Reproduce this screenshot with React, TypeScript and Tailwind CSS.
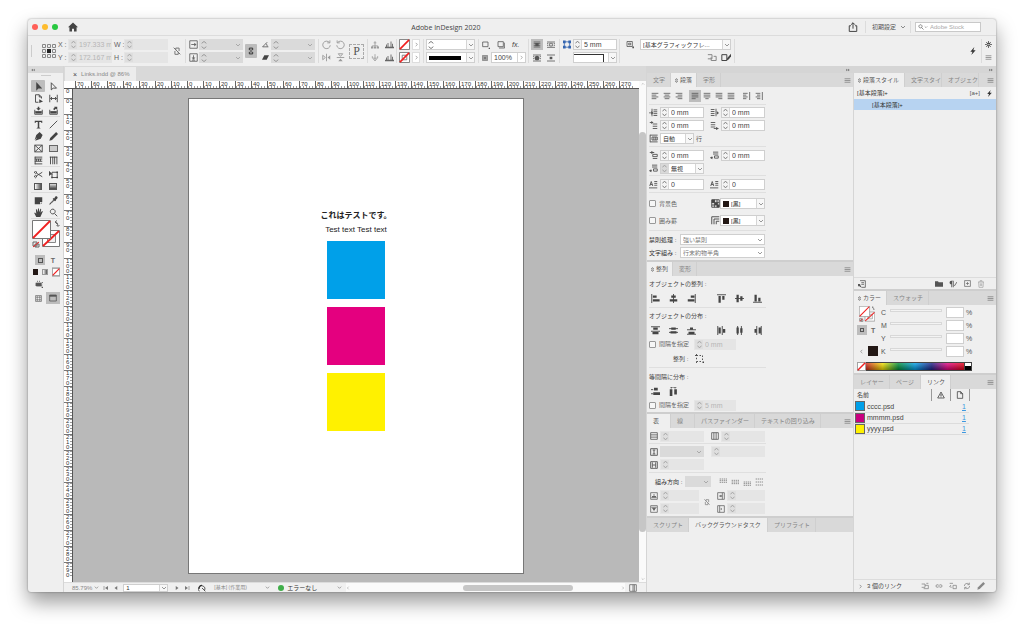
import type { ReactNode } from "react";
import clsx from "clsx";

// [stroke path, fill path], drawn on a 12 x 12 grid
const ICONS: Record<string, [string, string?]> = {
  home: ["", "M6 .5 0 6.3h1.7V11.5h3.1V8h2.4v3.5h3.1V6.3H12z"],
  share: ["M3.5 4.5h-2v6.8h9V4.5h-2M6 8V1M3.7 3.2 6 .9l2.3 2.3"],
  search: ["M5 1.5a3.2 3.2 0 1 0 .01 0M7.3 7.3 11 11"],
  down: ["M2 4l4 4 4-4"],
  right: ["M4 2l4 4-4 4"],
  left: ["M8 2 4 6l4 4"],
  up: ["M2 8l4-4 4 4"],
  spin: ["M2.5 3.5 6 .7l3.5 2.8M2.5 8.5 6 11.3l3.5-2.8"],
  updown: ["M3 4.5 6 1l3 3.5zM3 7.5 6 11l3-3.5z"],
  dblLeft: ["", "M5.5 2v8L1 6zM11 2v8L6.5 6z"],
  dblRight: ["", "M1 2v8l4.5-4zM6.5 2v8L11 6z"],
  menu: ["M1 3h10M1 6h10M1 9h10"],
  gear: ["M6 3.5a2.5 2.5 0 1 0 .01 0M6 0v3M6 9v3M0 6h3M9 6h3M2 2l2 2M8 8l2 2M10 2 8 4M4 8l-2 2M4 4h4v1H4M4 8h4"],
  bolt: ["", "M8 0 2 7h3.2L3.5 12 10 4.7H6.5z"],
  link: ["M4 5V2.5h4V5M4 7v2.5h4V7M6 4v4"],
  unlink: ["M4.5 5V2.5h4V6M3.5 6v4h4V7M2 2l8 8"],
  fitW: ["M1 1h10v10H1zM3 6h5", "M7 3.5 10 6 7 8.5z"],
  fitH: ["M1 1h10v10H1zM6 3v4M4 9.5h4", "M3.5 6h5L6 9z"],
  angle: ["M1 10h10M1 10 9 2M7 4.5q2 2 2 5"],
  shear: ["", "M4 2h8L8 10H0z"],
  rotCw: ["M10 3.5A5 5 0 1 0 11 7M10.5.5v3.3H7"],
  rotCcw: ["M2 3.5A5 5 0 1 1 1 7M1.5.5v3.3H5"],
  flipH: ["M6 1v10M1 3v6l3.5-3z", "M11 3v6L7.5 6z"],
  flipV: ["M1 6h10M3 1h6L6 4.5z", "M3 11h6L6 7.5z"],
  treeUp: ["M6 1v8M2 11V8h8v3M4 3.5h4", "M4 9h4v3H4zM0 9h3v3H0zM9 9h3v3H9z"],
  treeDown: ["M6 1v10M2 4v3h8V4M3.5 8.5 6 11l2.5-2.5"],
  bars: ["M4 10V4M8 10V2M2 10V6M10 10V5", "M0 9h12v2H0z"],
  boxDot: ["M1 1.5h8v7H1z", "M10 10h2v2h-2z"],
  box: ["M1.5 1h8v7.5h-8zM3 10.5h8.5V2.5"],
  opacity: ["M1 1h10v10H1zM3 3h2v2H3zM7 3h2v2H7zM5 5h2v2H5zM3 7h2v2H3zM7 7h2v2H7z"],
  wrapNone: ["M1 1.5h10M1 4h10M1 6.5h10M1 9h10", "M3.5 3h5v5h-5z"],
  wrapBox: ["M0 1.5h12M0 4h2M10 4h2M0 6.5h2M10 6.5h2M0 9.5h12M4 3.5h4v4H4z"],
  wrapShape: ["M0 1.5h12M0 4h2M10 4h2M0 7h2M10 7h2M0 10.5h12", "M6 2.5a3.5 3.5 0 1 0 .01 0z"],
  wrapJump: ["M0 1.5h12M0 10.5h12", "M4 4h4v4H4z"],
  corner: ["M3 2h6M3 10h6M2 3v6M10 3v6", "M0 0h4v4H0zM8 0h4v4H8zM0 8h4v4H0zM8 8h4v4H8z"],
  frameFx: ["M1.5 1.5h8V9h-8zM4 4h3v2.5H4z", "M9.5 9H12v2.5H9.5z"],
  copyBack: ["M1 2h5v5H1M5 5v4h6V4H8"],
  boxPen: ["M1 2h6v7H1z", "M12 1 7.5 6l-1 3 3-1.5L12 4z"],
  justL: ["M1 2h10M1 4.7h7M1 7.4h10M1 10h7"],
  justC: ["M1 2h10M2.5 4.7h7M1 7.4h10M2.5 10h7"],
  justR: ["M1 2h10M4 4.7h7M1 7.4h10M4 10h7"],
  justFL: ["M1 2h10M1 4.7h10M1 7.4h10M1 10h6"],
  justFC: ["M1 2h10M1 4.7h10M1 7.4h10M3.5 10h5"],
  justFR: ["M1 2h10M1 4.7h10M1 7.4h10M5 10h6"],
  justAll: ["M1 2h10M1 4.7h10M1 7.4h10M1 10h10"],
  justIn: ["M0 2h7M0 4.7h5M0 7.4h7M0 10h5M10 0v12"],
  justOut: ["M1 2h7M3 4.7h5M1 7.4h7M3 10h5M11 0v12"],
  indL: ["M4 1v10M6 2.5h5M6 5h5M6 7.5h5M6 10h5", "M0 6h3V4l3 2.5L3 9V7H0z"],
  indR: ["M1 2h5M1 4.7h5M1 7.4h5M1 10h5M8 1v10", "M12 6.5 9 4v5z"],
  indFirst: ["M5 4h6M5 7h6M5 10h6M1 2h4", "M3 0v4l3-2z"],
  indLast: ["M1 2h6M1 5h6M1 8h6M5 10h5", "M8 8v4l4-2z"],
  lines: ["M1.500 1v10M1.5 1.5h10M1.5 10.5h10M4 4h7v4H4zM6.5 4v4M9 4v4"],
  before: ["M5 4.5h6v3H5zM5 10h6M1 2h6", "M3 0v4l4-2z"],
  after: ["M4 1.5h7M4 4h7M6 6.5h5v3H6zM1 9h3", "M0 9l3-2v4z"],
  dropCap: ["M1 8 3 2l2 6M1.5 6h3M7 2h4M7 4.5h4M7 7h4M0 10.5h11"],
  shade: ["M1 1h10v10H1zM1 4.5h10M1 8h10M4.5 1v10M8 1v10", "M1 1h4v4H1zM5 5h4v3H5zM8 8h3v3H8z"],
  border: ["M1 11V1h10M4 11V4h7M7 11V7h4"],
  alL: ["M1 0v12", "M2.5 2h5v3h-5zM2.5 7h9v3h-9z"],
  alC: ["M6 0v12", "M3 2h6v3H3zM1 7h10v3H1z"],
  alR: ["M11 0v12", "M5 2h5v3H5zM1 7h9v3H1z"],
  alT: ["M0 1h12", "M2 2.5h3v9H2zM7 2.5h3v5H7z"],
  alM: ["M0 6h12", "M2 1h3v10H2zM7 3h3v6H7z"],
  alB: ["M0 11h12", "M2 1h3v9H2zM7 5h3v5H7z"],
  diT: ["M0 1h12M0 7h12", "M3 2h6v3H3zM2 8h8v3H2z"],
  diM: ["M0 3.5h12M0 8.5h12", "M3 2h6v3H3zM2 7h8v3H2z"],
  diB: ["M0 5h12M0 11h12", "M4 2h4v3H4zM2 7.5h8v3H2z"],
  diL: ["M1 0v12M7 0v12", "M2 2h3v8H2zM8 4h3v5H8z"],
  diC: ["M3.5 0v12M8.5 0v12", "M2 2h3v8H2zM7 3h3v6H7z"],
  diR: ["M5 0v12M11 0v12", "M2 4h3v5H2zM7.5 2h3v8h-3z"],
  dotBox: ["M2 0v2M2 10v2M0 2h4M6 2h2M2 5v2M2 10h2M6 10h2M10 2v2M10 6v2", "M10 10h2v2h-2z"],
  spV: ["M0 3.5h3M0 9h3", "M4 1h5v3.5H4zM3 7h9v3.5H3z"],
  spH: ["M2 0h8M3 0v2M8 0v2", "M1 3h3.5v9H1zM7 3h3.5v7H7z"],
  rows: ["M1 1h10v10H1zM1 4.3h10M1 7.7h10"],
  cols: ["M1 1h10v10H1zM4.3 1v10M7.7 1v10"],
  cellH: ["M1 1h10v10H1zM6 3v6M4 3h4M4 9h4"],
  cellW: ["M1 1h10v10H1zM3.5 2v8M8.5 2v8M4 6h4"],
  gridTop: ["M1 1.5h2M4 1.5h2M7 1.5h2M10 1.5h2M1 4h2M4 4h2M7 4h2M10 4h2M1 6.5h2M4 6.5h2M7 6.5h2M10 6.5h2"],
  gridMid: ["M1 3.5h2M4 3.5h2M7 3.5h2M10 3.5h2M1 6h2M4 6h2M7 6h2M10 6h2M1 8.5h2M4 8.5h2M7 8.5h2M10 8.5h2"],
  gridBottom: ["M1 6h2M4 6h2M7 6h2M10 6h2M1 8.5h2M4 8.5h2M7 8.5h2M10 8.5h2M1 11h2M4 11h2M7 11h2M10 11h2"],
  gridFull: ["M1 1.5h2M4 1.5h2M7 1.5h2M10 1.5h2M1 6h2M4 6h2M7 6h2M10 6h2M1 10.5h2M4 10.5h2M7 10.5h2M10 10.5h2"],
  padB: ["M1 1h10v10H1zM2 8.5h8M6 3v4", "M3 6h6v2H3z"],
  padT: ["M1 1h10v10H1zM2 3.5h8", "M3 4.5h6L6 9z"],
  padR: ["M1 1h10v10H1zM8 1v10M3 6h4", "M5 4v4l3-2z"],
  padL: ["M1 1h10v10H1zM4 1v10", "M7 4v4L5 6z"],
  select: ["", "M3 0v11.5l2.8-2.8H11z"],
  direct: ["M3 1v9.5l2.5-2.3H10z"],
  page: ["M2 1h5l3 3v2M2 1v10h4M7 1v3h3", "M7 7l5 3-5 2z"],
  gap: ["M1 1v10M11 1v10M2 6h8M4 4 2 6l2 2M8 4l2 2-2 2"],
  collect: ["M1 5v6h10V5M1 8h10", "M2 7h8v3H2zM5 1h2v2h2L6 6 3 3h2z"],
  place: ["M1 5v6h10V5M1 8h10", "M2 7h8v3H2zM7 1h4v4L9 3.5l-2 2L5.500 4l2-2z"],
  type: ["", "M1 1h10v3h-1l-.5-1.5H7V10l1.5.5v.7h-5v-.7L5 10V2.5H2.5L2 4H1z"],
  line: ["M1 11 11 1"],
  pen: ["", "M7.5 0l4 4L9 9l-7.500 2.500 3-4.500-1 1L.8 11 3 4z"],
  pencil: ["", "M9.5 0 12 2.500l-8 8-3.500 1 1-3.500z"],
  frame: ["M1 1.5h10v9H1zM1 1.5l10 9M11 1.5l-10 9"],
  hGrid: ["M1 1.5h10M1 4h10M1 7h10M1 10.5h10M1.5 1v10M3.5 4v3M6 4v3M8.5 4v3"],
  vGrid: ["M1 1.5h10M2 1v10M5 1v10M7.5 1v10M10.5 1v10"],
  scissors: ["M3 4l8 5M3 8l8-5M2 2a1.3 1.3 0 1 0 .1 0M2 7.5a1.3 1.3 0 1 0 .1 0"],
  transform: ["M4 3h7v7H4z", "M0 1v7l2.5-2H5zM3 9h2v2H3zM10 2h2v2h-2zM10 9h2v2h-2z"],
  note: ["", "M1 1.500h10V8H8v3H1zM9 9h2l-2 2z"],
  eyedrop: ["M7 4.5l-5 5L1 11l1.5-1 5-5", "M8.5.8c1.5-1.500 4 .8 2.500 2.500L9 5.200l.5.8L8 7 4.800 4l1.300-1.200.8.5z"],
  hand: ["", "M3 12 .3 6.500l1-.6L3 7.500 2.500 2l1.200-.3L5 5.500 5.300.5h1.200L7 5.500 8.500 1l1.100.3-.8 5L10.800 4l1 .6L9.800 9l-1.300 3z"],
  viewMode: ["M1 1h10v10H1zM3 3h2v2H3zM7 3h2v2H7zM3 7h2v2H3zM7 7h2v2H7z"],
  screen: ["M1 1.5h10v9H1z", "M1 1.5h10V4H1z"],
  clip: ["M2 5h8v4H2z", "M1 4h8v5H1zM3 1h1v2H3zM6 1h1v2H6zM10 3h2v1h-2zM10 10h2v2h-2z"],
  folder: ["", "M0 2h4.5l1 1.5H12V10H0z"],
  para: ["M8 9l4-6", "M7 1H3.5C0 1 0 6.5 3.5 6.5V11H5V2h1v9h1z"],
  plusBox: ["M1 1h10v10H1zM6 3.5v5M3.5 6h5"],
  trash: ["M1.5 3h9M2.5 3l.5 8h6l.5-8M4.5 3V1h3v2M5 5v4M7 5v4"],
  styleLoad: ["M3 1h8v10H5M5 4h4M5 6.5h4", "M0 6h4L2.700 7.300 5 9.500 3.700 11 1.300 8.700 0 10z"],
  warn: ["M6 1.5l5 9H1z", "M5.3 4h1.4v3.5H5.3zM5.3 8.3h1.4v1.2H5.3z"],
  doc: ["M2 1h5l3 3v7H2zM7 1v3h3"],
  first: ["M2 2v8", "M10 2v8L4 6z"],
  last: ["M10 2v8", "M2 2v8l6-4z"],
  prev: ["", "M8.5 2v8L3 6z"],
  next: ["", "M3.5 2v8L9 6z"],
  relink: ["M1 3h5v5H1M6 5h5v5H4M8 2h3"],
  chain: ["M5 4H3.5a2 2 0 0 0 0 4H5M7 4h1.5a2 2 0 0 1 0 4H7M4 6h4"],
  goTo: ["M1 2h5M3 4.5 1 7l3 1M6 5h5v5H6z"],
  refresh: ["M2 6a4 4 0 0 1 7-2.5M10 6a4 4 0 0 1-7 2.5M9.5 1v3h-3M2.5 11V8h3"],
  split: ["M1 1h10v10H1zM6 1v10M8 1v10"],
  preflight: ["M2 11A5 5 0 1 1 10 9.5M6 6l5 5", "M6 1a5 5 0 0 0-5 6h2a3 3 0 0 1 3-4z"],
};

function Icon({ n, className = "size-2 text-[#555]" }: { n: string; className?: string }) {
  const [stroke, fill] = ICONS[n];
  return (
    <svg viewBox="0 0 12 12" className={clsx("shrink-0", className)} aria-hidden="true">
      {stroke && <path d={stroke} fill="none" stroke="currentColor" strokeWidth="1.2" />}
      {fill && <path d={fill} fill="currentColor" />}
    </svg>
  );
}

function IconBtn({ n, label, icon, className = "size-2.5" }: { n: string; label: string; icon?: string; className?: string }) {
  return (
    <button aria-label={label} className={clsx("flex shrink-0 items-center justify-center", className)}>
      <Icon n={n} className={icon} />
    </button>
  );
}

interface FieldProps {
  label: string;
  value?: string;
  off?: boolean;
  className?: string;
}

function NumField({ label, value = "", off, className = "w-11" }: FieldProps) {
  return (
    <span
      className={clsx(
        "flex h-[11px] shrink-0 border",
        off ? "border-[#e5e5e5] bg-[#e5e5e5] text-[#b5b5b5]" : "border-[#cfcfcf] bg-white text-[#444]",
        className
      )}
    >
      <button
        aria-label={`${label} step`}
        className={clsx("flex w-2 shrink-0 items-center justify-center", off ? "bg-[#dedede]" : "border-r border-[#d8d8d8] bg-[#f4f4f4]")}
      >
        <Icon n="spin" className={clsx("size-[7px]", off ? "text-[#888]" : "text-[#444]")} />
      </button>
      <input aria-label={label} defaultValue={value} disabled={off} className="w-0 min-w-0 flex-1 pl-0.5 text-[7px] leading-none" />
    </span>
  );
}

function SelectField({ label, value = "", off, className = "w-11", lead, plain }: FieldProps & { lead?: ReactNode; plain?: boolean }) {
  return (
    <span
      className={clsx(
        "flex h-[11px] shrink-0 items-center border",
        off ? "border-[#dadada] bg-[#dadada]" : "border-[#cfcfcf] bg-white text-[#333]",
        className
      )}
    >
      {lead}
      <select aria-label={label} disabled={off} className="h-full w-0 min-w-0 flex-1 appearance-none pl-0.5 text-[6px] leading-none">
        <option>{value}</option>
      </select>
      <span className={clsx("flex h-full w-2 shrink-0 items-center justify-center", !off && !plain && "border-l border-[#d5d5d5] bg-[#f7f7f7]")}>
        <Icon n="down" className={clsx("size-[6px]", off ? "text-[#888]" : "text-[#555]")} />
      </span>
    </span>
  );
}

function Check({ label }: { label: string }) {
  return (
    <label className="flex items-center gap-[3px] text-[6px] text-[#666]">
      <input type="checkbox" className="size-[7px] appearance-none rounded-[1px] border border-[#999] bg-[#f6f6f6]" />
      {label}
    </label>
  );
}

interface TabItem {
  name: string;
  w: string;
  active?: boolean;
  arrows?: boolean;
}

function TabBar({ tabs, menu = true, top = true }: { tabs: TabItem[]; menu?: boolean; top?: boolean }) {
  return (
    <div className={clsx("flex shrink-0 items-stretch bg-[#d9d9d9]", top ? "h-4 border-t-2 border-[#cecece]" : "h-3.5")}>
      <div role="tablist" className="flex min-w-0 flex-1">
        {tabs.map((t) => (
          <button
            key={t.name}
            role="tab"
            aria-selected={!!t.active}
            className={clsx(
              "flex shrink-0 items-center overflow-hidden border-r border-[#cfcfcf] text-[6px] whitespace-nowrap",
              t.arrows ? "gap-px pl-[3px]" : "pl-1.5",
              t.active ? "bg-[#efefef] text-[#555]" : "text-[#858585]",
              t.w
            )}
          >
            {t.arrows && <Icon n="updown" className="size-[5px] text-[#555]" />}
            {t.name}
          </button>
        ))}
      </div>
      {menu && <IconBtn n="menu" label="Panel menu" className="w-3" icon="size-[7px] text-[#777]" />}
    </div>
  );
}

const Rule = ({ className = "my-px" }: { className?: string }) => <div className={clsx("h-px shrink-0 bg-[#dfdfdf]", className)} />;

const Sep = ({ className = "mx-[3px]" }: { className?: string }) => <div className={clsx("h-6 w-px shrink-0 bg-[#dcdcdc]", className)} />;

const Pair = ({ children, className = "" }: { children: ReactNode; className?: string }) => (
  <div className={clsx("flex shrink-0 flex-col gap-0.5 *:h-[11px]", className)}>{children}</div>
);

function NoneSwatch({ className = "size-[11px]", hollow }: { className?: string; hollow?: boolean }) {
  return (
    <svg viewBox="0 0 12 12" className={clsx("shrink-0", className)} aria-hidden="true">
      <path d="M.5.5h11v11H.5z" fill="#fff" stroke="#777" />
      {hollow && <path d="M3.5 3.5h5v5h-5z" fill="none" stroke="#777" />}
      <path d="M1 11 11 1" stroke="#f02020" strokeWidth="1.8" />
    </svg>
  );
}

function FillStroke({ className = "size-7" }: { className?: string }) {
  return (
    <svg viewBox="0 0 28 28" className={clsx("shrink-0", className)} aria-hidden="true">
      <path d="M10.5 10.5h17v16h-17z" fill="#fff" stroke="#777" />
      <path d="M15.5 14.5h8v8h-8z" fill="#efefef" stroke="#888" />
      <path d="M11 26l16-15" stroke="#f02020" strokeWidth="1.8" />
      <path d="M.5.5h18v18H.5z" fill="#fff" stroke="#777" />
      <path d="M1 18 18 1" stroke="#f02020" strokeWidth="1.8" />
      <path d="M23 2q3 0 3 4M25 .5 23 2l2 2M24.5 5 26 6.5 27.500 5M1 22h4v4H1zM3 24h4v3H3z" fill="none" stroke="#666" />
      <path d="M1 27l6-5" stroke="#f02020" />
    </svg>
  );
}

function TitleBar() {
  return (
    <header className="flex h-[17px] shrink-0 items-center border-b border-[#dcdcdc] pr-[15px] pl-1">
      <div className="flex flex-1 items-center gap-1">
        <button aria-label="Close" className="size-1.5 rounded-full bg-[#ff5f57]" />
        <button aria-label="Minimize" className="size-1.5 rounded-full bg-[#febc2e]" />
        <button aria-label="Zoom" className="size-1.5 rounded-full bg-[#28c840]" />
        <IconBtn n="home" label="Home" className="ml-1.5 size-2.5" icon="size-2.5 text-[#444]" />
      </div>
      <h1 className="font-['Open_Sans',sans-serif] text-[7px] text-[#444]">Adobe InDesign 2020</h1>
      <div className="flex flex-[1.32] items-center justify-end">
        <IconBtn n="share" label="Share" icon="size-2.5 text-[#444]" />
        <Sep className="mr-1.5 ml-[7px] !h-3" />
        <button className="flex items-center gap-1 text-[6px] text-[#555]">
          初期設定
          <Icon n="down" className="size-[6px] text-[#444]" />
        </button>
        <Sep className="mx-1 !h-3" />
        <label className="flex h-2.5 w-[66px] items-center border border-[#c9c9c9] bg-white pl-0.5">
          <Icon n="search" className="size-[6px] text-[#444]" />
          <Icon n="down" className="size-1 text-[#444]" />
          <input aria-label="Search" placeholder="Adobe Stock" className="w-0 flex-1 pl-0.5 text-[6px] placeholder:text-[#aaa]" />
        </label>
      </div>
    </header>
  );
}

const Letter = ({ children }: { children: string }) => (
  <span className="flex w-2.5 items-center text-[7px] whitespace-nowrap text-[#666]">{children}</span>
);

const darkSpin = <Icon n="spin" className="size-2 text-[#888]" />;

function ControlBar() {
  return (
    <div className="flex h-[30px] shrink-0 items-center overflow-hidden pl-[3px]">
      <div className="h-3 w-px bg-[#ccc]" />
      <svg viewBox="0 0 14 14" className="mr-0.5 ml-2.5 size-3.5 shrink-0" aria-hidden="true">
        <path
          d="M.5.5h3v3h-3zM5.5.5h3v3h-3zM10.5.5h3v3h-3zM.5 5.5h3v3h-3zM10.5 5.5h3v3h-3zM.5 10.5h3v3h-3zM5.5 10.5h3v3h-3zM10.5 10.5h3v3h-3z"
          fill="#efefef"
          stroke="#888"
        />
        <path d="M5 5h4v4H5z" fill="#222" />
      </svg>
      <Pair><Letter>X :</Letter><Letter>Y :</Letter></Pair>
      <Pair>
        <NumField label="X" value="197.333 m" off />
        <NumField label="Y" value="172.167 m" off />
      </Pair>
      <Pair className="ml-0.5"><Letter>W :</Letter><Letter>H :</Letter></Pair>
      <Pair>
        <NumField label="W" off />
        <NumField label="H" off />
      </Pair>
      <IconBtn n="unlink" label="Constrain size" className="ml-1 size-2.5" icon="size-2.5 text-[#777]" />
      <Sep />
      <Pair className="mr-px"><Icon n="fitW" className="w-[9px] text-[#666]" /><Icon n="fitH" className="w-[9px] text-[#666]" /></Pair>
      <Pair>
        <SelectField label="Scale X" off lead={darkSpin} />
        <SelectField label="Scale Y" off lead={darkSpin} />
      </Pair>
      <IconBtn n="link" label="Constrain scale" className="mx-0.5 h-3.5 w-3 rounded-[1px] bg-[#bdbdbd]" icon="size-2.5 text-[#333]" />
      <Pair className="mr-0.5 ml-[3px]"><Icon n="angle" className="w-[7px] text-[#444]" /><Icon n="shear" className="w-[7px] text-[#444]" /></Pair>
      <Pair>
        <SelectField label="Rotation" off lead={darkSpin} />
        <SelectField label="Shear" off lead={darkSpin} />
      </Pair>
      <Sep />
      <Pair><Icon n="rotCw" className="w-[9px] text-[#999]" /><Icon n="flipH" className="w-[9px] text-[#999]" /></Pair>
      <Pair className="ml-[5px]"><Icon n="rotCcw" className="w-[9px] text-[#999]" /><Icon n="flipV" className="w-[9px] text-[#999]" /></Pair>
      <span className="ml-1 flex size-[15px] shrink-0 items-center justify-center border border-dashed border-[#aaa] font-['Liberation_Serif',serif] text-xs text-[#555]">P</span>
      <Sep />
      <Pair><Icon n="treeUp" className="w-2 text-[#999]" /><Icon n="treeDown" className="w-2 text-[#999]" /></Pair>
      <Pair className="ml-1.5"><Icon n="bars" className="w-[9px] text-[#666]" /><Icon n="bars" className="w-[9px] text-[#666]" /></Pair>
      <Sep className="mx-0.5" />
      <Pair><NoneSwatch /><NoneSwatch hollow /></Pair>
      <Pair className="ml-0.5">
        <IconBtn n="right" label="Fill options" className="w-2 border border-[#ddd] bg-white" icon="size-[5px] text-[#555]" />
        <IconBtn n="right" label="Stroke options" className="w-2 border border-[#ddd] bg-white" icon="size-[5px] text-[#555]" />
      </Pair>
      <Sep className="mr-0.5 ml-[3px]" />
      <Pair>
        <SelectField label="Stroke weight" className="w-[49px]" lead={<Icon n="spin" className="size-2 text-[#555]" />} />
        <SelectField label="Stroke type" className="w-[49px]" lead={<span className="ml-0.5 h-1 w-8 bg-black" />} />
      </Pair>
      <Sep />
      <Pair>
        <div className="flex items-center gap-[7px]">
          <Icon n="boxDot" />
          <Icon n="box" />
          <span className="text-[7px] text-[#444] italic">fx.</span>
        </div>
        <div className="flex items-center gap-[3px]">
          <Icon n="opacity" className="size-[6px] text-[#555]" />
          <label className="flex h-full w-[35px] border border-[#cfcfcf] bg-white text-[7px] text-[#444]">
            <input aria-label="Opacity" defaultValue="100%" className="w-0 flex-1 pl-0.5" />
            <span className="flex w-2 items-center justify-center border-l border-[#d5d5d5]"><Icon n="right" className="size-[5px] text-[#666]" /></span>
          </label>
        </div>
      </Pair>
      <Sep className="mx-0.5" />
      <Pair>
        <IconBtn n="wrapNone" label="No text wrap" className="w-3 bg-[#bdbdbd]" />
        <IconBtn n="wrapShape" label="Wrap around shape" className="w-3" />
      </Pair>
      <Pair className="ml-0.5">
        <IconBtn n="wrapBox" label="Wrap around box" className="w-3" />
        <IconBtn n="wrapJump" label="Jump object" className="w-3" />
      </Pair>
      <Sep className="mr-[3px] ml-0.5" />
      <Pair className="mr-0.5"><Icon n="corner" className="w-2 text-[#3465b0]" /><span /></Pair>
      <Pair>
        <NumField label="Corner size" value="5 mm" />
        <SelectField label="Corner shape" lead={<span className="h-2 w-[30px] border-t border-r border-[#333]" />} />
      </Pair>
      <Sep className="mr-1.5 ml-0.5" />
      <Pair className="mr-1.5"><Icon n="frameFx" className="w-2 text-[#555]" /><span /></Pair>
      <Pair>
        <SelectField label="Object style" value="[基本グラフィックフレ..." className="w-[91px]" />
        <div className="flex items-center justify-end gap-1">
          <Icon n="copyBack" className="size-2.5 text-[#888]" />
          <Icon n="boxPen" className="size-2.5 text-[#444]" />
        </div>
      </Pair>
      <Sep className="mx-[3px]" />
      <IconBtn n="bolt" label="Quick apply" className="ml-auto size-2.5" icon="size-2 text-[#333]" />
      <Sep className="mr-0.5 ml-[3px]" />
      <Pair className="mr-1">
        <IconBtn n="gear" label="Settings" className="w-2" icon="size-[7px] text-[#333]" />
        <IconBtn n="menu" label="Control menu" className="w-2" icon="size-[7px] text-[#777]" />
      </Pair>
    </div>
  );
}

const TOOL_GROUPS: [string, string][][] = [
  [["select", "direct"], ["page", "gap"], ["collect", "place"]],
  [["type", "line"], ["pen", "pencil"], ["frame", "rect"], ["hGrid", "vGrid"]],
  [["scissors", "transform"], ["gradient", "feather"]],
  [["note", "eyedrop"], ["hand", "search"]],
];

function Tool({ n }: { n: string }) {
  return (
    <button aria-label={n} className={clsx("flex h-3 w-[15px] items-center justify-center", n === "select" && "rounded-[1px] bg-[#bdbdbd]")}>
      {n === "gradient" ? (
        <span className="h-[7px] w-2 border border-[#555] bg-linear-to-r from-white to-[#555]" />
      ) : n === "feather" ? (
        <span className="h-[7px] w-2 border border-[#555] bg-linear-to-b from-[#ddd] to-[#444]" />
      ) : n === "rect" ? (
        <span className="h-[7px] w-[9px] border border-[#666] bg-[#ccc]" />
      ) : (
        <Icon n={n} className="size-[9px] text-[#444]" />
      )}
    </button>
  );
}

function Toolbox() {
  return (
    <aside className="flex w-9 shrink-0 flex-col border-r border-[#d5d5d5]">
      <div className="flex h-[7px] shrink-0 items-center bg-[#d9d9d9] pl-[3px]"><Icon n="dblLeft" className="size-1 text-[#666]" /></div>
      <div className="mx-auto mt-0.5 mb-1 h-px w-2.5 bg-[#ccc]" />
      <div className="flex flex-col px-[3px]">
        {TOOL_GROUPS.map((group, i) => (
          <div key={i} className="mb-px border-b border-[#dcdcdc] last:border-0">
            {group.map(([a, b]) => (
              <div key={a} className="flex gap-px">
                <Tool n={a} />
                <Tool n={b} />
              </div>
            ))}
          </div>
        ))}
        <FillStroke className="ml-px size-7" />
        <div className="mt-1.5 flex h-3 items-center gap-1 pl-1">
          <button aria-label="Format container" className="flex h-2.5 w-2.5 items-center justify-center bg-[#bdbdbd]"><span className="size-[5px] border border-[#555]" /></button>
          <button className="w-2 text-[7px] font-bold text-[#666]">T</button>
        </div>
        <div className="flex h-3 items-center gap-1 pl-0.5">
          <span className="size-1.5 bg-[#231815]" />
          <span className="size-1.5 border border-[#999] bg-linear-to-r from-white to-[#555]" />
          <span className="flex size-2.5 items-center justify-center bg-[#bdbdbd]"><NoneSwatch className="size-2" /></span>
        </div>
        <div className="flex h-3 items-center pl-1"><Icon n="clip" /></div>
        <div className="mt-0.5 flex h-3 items-center justify-between pl-1">
          <Icon n="viewMode" className="size-[7px] text-[#666]" />
          <IconBtn n="screen" label="Screen mode" className="h-3 w-3.5 bg-[#bdbdbd]" />
        </div>
      </div>
    </aside>
  );
}

const H_MARKS = Array.from({ length: 35 }, (_, i) => Math.abs((i - 7) * 10));
const V_MARKS = Array.from({ length: 30 }, (_, i) => i * 10);

function Document() {
  return (
    <main className="flex min-w-0 flex-1 flex-col">
      <div className="flex h-[15px] shrink-0 items-end bg-[#d9d9d9] pl-px">
        <div className="flex h-3.5 w-[71px] items-center gap-1 bg-[#ececec] pl-2 text-[6px] text-[#888]">
          <button aria-label="Close document" className="text-[7px] text-[#444]">×</button>
          Links.indd @ 86%
        </div>
      </div>
      <div className="flex min-h-0 flex-1">
        <div className="flex min-w-0 flex-1 flex-col">
          <div className="flex h-2 shrink-0 overflow-hidden border-b border-[#555] bg-white pl-[11px]">
            {H_MARKS.map((m, i) => (
              <span
                key={i}
                className="w-4 shrink-0 border-l border-[#666] bg-[repeating-linear-gradient(90deg,#999_0_1px,transparent_1px_3px)] bg-size-[100%_2px] bg-bottom bg-no-repeat pl-px text-[6px] leading-[6px] text-[#333]"
              >
                {m}
              </span>
            ))}
          </div>
          <div className="flex min-h-0 flex-1">
            <div className="w-[9px] shrink-0 overflow-hidden border-r border-[#555] bg-white">
              <div className="h-[9px] pl-0.5 text-[6px] leading-[5px] text-[#333]">0</div>
              {V_MARKS.map((m) => (
                <div
                  key={m}
                  className="flex h-4 flex-col border-t border-[#777] bg-[repeating-linear-gradient(180deg,#999_0_1px,transparent_1px_3px)] bg-size-[2px_100%] bg-right bg-no-repeat pl-0.5 text-[6px] leading-[5px] text-[#333]"
                >
                  {String(m).split("").map((c, i) => <span key={i}>{c}</span>)}
                </div>
              ))}
            </div>
            <div className="flex min-w-0 flex-1 items-center justify-center overflow-hidden bg-[#b9b9b9]">
              <article className="flex h-[476px] w-[336px] shrink-0 flex-col items-center gap-2 border border-[#777] bg-white pt-[113px]">
                <div className="text-center text-[8px] text-[#222]">
                  <p className="h-3.5 font-bold">これはテストです。</p>
                  <p className="h-[7px]">Test text Test text</p>
                </div>
                <div className="size-[58px] bg-[#00a0e9]" />
                <div className="size-[58px] bg-[#e4007f]" />
                <div className="size-[58px] bg-[#fff100]" />
              </article>
            </div>
          </div>
        </div>
        <div className="flex w-[7px] shrink-0 flex-col items-center bg-[#fafafa]">
          <Icon n="up" className="mt-px size-1 text-[#888]" />
          <div className="mt-[46px] mb-[45px] w-full flex-1 rounded-full bg-[#c6c6c6]" />
          <Icon n="down" className="mb-px size-1 text-[#888]" />
        </div>
      </div>
      <div className="flex h-2.5 shrink-0 items-center border-t border-[#dcdcdc] bg-[#f0f0f0] pl-2 text-[6px] text-[#888]">
        <span>85.79%</span>
        <Icon n="down" className="mr-1 ml-0.5 size-[5px] text-[#555]" />
        <IconBtn n="first" label="First page" className="size-1.5" icon="size-[6px] text-[#777]" />
        <IconBtn n="prev" label="Previous page" className="mr-1 ml-1 size-1.5" icon="size-[6px] text-[#777]" />
        <SelectField label="Page" value="1" className="!h-2 w-[45px]" />
        <IconBtn n="next" label="Next page" className="ml-1.5 size-1.5" icon="size-[6px] text-[#777]" />
        <IconBtn n="last" label="Last page" className="mr-2 ml-1 size-1.5" icon="size-[6px] text-[#777]" />
        <Icon n="preflight" className="size-2 text-[#333]" />
        <span className="ml-2 w-[51px] text-[5px] whitespace-nowrap">[基本] (作業用)</span>
        <Icon n="down" className="size-[5px] text-[#555]" />
        <span className="mr-[3px] ml-2 size-1.5 shrink-0 rounded-full bg-[#3fae49]" />
        <span className="w-[50px] text-[#333]">エラーなし</span>
        <Icon n="down" className="size-[5px] text-[#555]" />
        <div className="ml-1 flex h-full min-w-0 flex-1 items-center bg-[#fafafa]">
          <Icon n="left" className="size-1 text-[#777]" />
          <div className="mr-12 ml-auto h-1.5 w-[110px] rounded-full bg-[#c6c6c6]" />
          <Icon n="right" className="size-1 text-[#777]" />
        </div>
        <Icon n="split" className="mr-[9px] ml-1 size-2 text-[#666]" />
      </div>
    </main>
  );
}

function FieldRow({ a, b, av = "0 mm", bv = "0 mm", name }: { a: string; b: string; av?: string; bv?: string; name: string }) {
  return (
    <div className="flex h-[13px] items-center">
      <Icon n={a} className="mr-0.5 size-[9px] text-[#555]" />
      <NumField label={`${name} 1`} value={av} />
      <Icon n={b} className="mr-0.5 ml-1.5 size-[9px] text-[#555]" />
      <NumField label={`${name} 2`} value={bv} />
    </div>
  );
}

const blackSwatch = <span className="ml-0.5 size-1.5 shrink-0 bg-[#231815]" />;

function ParagraphPanel() {
  return (
    <section className="flex w-[119px] shrink-0 flex-col pb-px pl-0.5">
      <div className="flex h-[17px] items-center">
        {["justL", "justC", "justR"].map((n) => <IconBtn key={n} n={n} label={n} className="size-3" />)}
        <IconBtn n="justFL" label="justFL" className="ml-1 size-3 bg-[#bdbdbd]" />
        {["justFC", "justFR", "justAll"].map((n) => <IconBtn key={n} n={n} label={n} className="size-3" />)}
        <IconBtn n="justIn" label="justIn" className="ml-1 size-3" />
        <IconBtn n="justOut" label="justOut" className="size-3" />
      </div>
      <Rule className="mb-px" />
      <FieldRow a="indL" b="indR" name="Indent" />
      <FieldRow a="indFirst" b="indLast" name="Line indent" />
      <div className="flex h-[13px] items-center text-[6px] text-[#555]">
        <Icon n="lines" className="mr-0.5 size-[9px] text-[#555]" />
        <SelectField label="行取り" value="自動" className="mr-0.5 w-[34px]" />行
      </div>
      <Rule className="mt-px mb-0.5" />
      <FieldRow a="before" b="after" name="Space" />
      <div className="flex h-[13px] items-center">
        <Icon n="after" className="mr-0.5 size-[9px] text-[#555]" />
        <SelectField label="段落間" value="無視" lead={<span className="flex h-full w-2 items-center bg-[#d9d9d9]"><Icon n="spin" className="size-[7px] text-[#888]" /></span>} />
      </div>
      <Rule className="mb-0.5" />
      <FieldRow a="dropCap" b="dropCap" av="0" bv="0" name="Drop cap" />
      <Rule className="mt-px mb-0.5" />
      <div className="flex h-[17px] items-center">
        <span className="w-[62px]"><Check label="背景色" /></span>
        <Icon n="shade" className="size-[9px] text-[#444]" />
        <SelectField label="背景色" value="[黒]" className="w-[45px]" lead={blackSwatch} />
      </div>
      <div className="flex h-[17px] items-center">
        <span className="w-[62px]"><Check label="囲み罫" /></span>
        <Icon n="border" className="size-[9px] text-[#444]" />
        <SelectField label="囲み罫" value="[黒]" className="w-[45px]" lead={blackSwatch} />
      </div>
      <Rule className="mt-px mb-0.5" />
      {[["禁則処理 :", "強い禁則"], ["文字組み :", "行末約物半角"]].map(([k, v]) => (
        <div key={k} className="flex h-[13px] items-center text-[6px] text-[#333]">
          <span className="w-[31px] whitespace-nowrap">{k}</span>
          <SelectField label={k} value={v} plain className="w-[85px] text-[#777]!" />
        </div>
      ))}
    </section>
  );
}

const PanelTitle = ({ children }: { children: string }) => <h2 className="flex h-[15px] items-center text-[6px] text-[#444]">{children}</h2>;

function IconSet({ left, right }: { left: string[]; right: string[] }) {
  return (
    <div className="flex h-3.5 items-center gap-2 pl-px">
      {left.map((n) => <IconBtn key={n} n={n} label={n} icon="size-[9px] text-[#444]" />)}
      {right.map((n, i) => <IconBtn key={n} n={n} label={n} icon="size-[9px] text-[#444]" className={clsx("size-2.5", i === 0 && "ml-3")} />)}
    </div>
  );
}

const SpacingRow = ({ value }: { value: string }) => (
  <div className="flex h-3.5 items-center">
    <span className="w-[45px]"><Check label="間隔を指定" /></span>
    <NumField label="間隔" value={value} off className="w-[42px]" />
  </div>
);

function AlignPanel() {
  return (
    <section className="flex w-[119px] shrink-0 flex-col pl-0.5">
      <PanelTitle>オブジェクトの整列 :</PanelTitle>
      <IconSet left={["alL", "alC", "alR"]} right={["alT", "alM", "alB"]} />
      <Rule className="mt-0.5" />
      <PanelTitle>オブジェクトの分布 :</PanelTitle>
      <IconSet left={["diT", "diM", "diB"]} right={["diL", "diC", "diR"]} />
      <SpacingRow value="0 mm" />
      <div className="flex h-[15px] items-center gap-1.5 pl-6 text-[6px] text-[#444]">
        整列 :
        <IconBtn n="dotBox" label="Align to" icon="size-[9px] text-[#444]" />
      </div>
      <Rule className="my-px" />
      <PanelTitle>等間隔に分布 :</PanelTitle>
      <IconSet left={["spV", "spH"]} right={[]} />
      <SpacingRow value="5 mm" />
    </section>
  );
}

function TablePanel() {
  return (
    <section className="flex w-[119px] shrink-0 flex-col pt-px pb-px pl-0.5">
      <div className="flex h-3.5 items-center">
        <Icon n="rows" className="mr-0.5 ml-px size-2 text-[#555]" />
        <NumField label="Rows" off />
        <Icon n="cols" className="mr-0.5 ml-[7px] size-2 text-[#555]" />
        <NumField label="Columns" off />
      </div>
      <Rule className="mb-px" />
      <div className="flex h-[13px] items-center">
        <Icon n="cellH" className="mr-0.5 ml-px size-2 text-[#444]" />
        <SelectField label="Row height rule" off />
        <NumField label="Row height" off className="ml-[7px] w-[54px]" />
      </div>
      <div className="flex h-[13px] items-center">
        <Icon n="cellW" className="mr-0.5 ml-px size-2 text-[#444]" />
        <NumField label="Column width" off />
      </div>
      <Rule className="my-px" />
      <div className="flex h-[15px] items-center text-[6px] text-[#333]">
        <span className="w-9 pl-1.5 whitespace-nowrap">組み方向 :</span>
        <SelectField label="組み方向" off className="mr-2 w-[26px]" />
        <div className="flex gap-1">
          {["gridTop", "gridMid", "gridBottom", "gridFull"].map((n) => <IconBtn key={n} n={n} label={n} className="size-2" icon="size-2 text-[#777]" />)}
        </div>
      </div>
      <div className="flex items-center">
        <div className="flex flex-col">
          {["padB", "padT"].map((n) => (
            <div key={n} className="flex h-[13px] items-center">
              <Icon n={n} className="mr-0.5 ml-px size-2 text-[#666]" />
              <NumField label={n} off className="w-[39px]" />
            </div>
          ))}
        </div>
        <Icon n="unlink" className="mx-1 size-2 text-[#888]" />
        <div className="flex flex-col">
          {["padR", "padL"].map((n) => (
            <div key={n} className="flex h-[13px] items-center">
              <Icon n={n} className="mr-0.5 ml-0.5 size-2 text-[#666]" />
              <NumField label={n} off className="w-[38px]" />
            </div>
          ))}
        </div>
      </div>
    </section>
  );
}

function MiddleDock() {
  return (
    <aside className="flex w-[208px] shrink-0 flex-col border-x border-[#d5d5d5]">
      <div className="flex h-[7px] shrink-0 items-center justify-end bg-[#d5d5d5] pr-[3px]"><Icon n="dblRight" className="size-1 text-[#666]" /></div>
      <TabBar top={false} tabs={[{ name: "文字", w: "w-6" }, { name: "段落", w: "w-[26px]", active: true, arrows: true }, { name: "字形", w: "w-6" }]} />
      <ParagraphPanel />
      <TabBar tabs={[{ name: "整列", w: "w-[26px]", active: true, arrows: true }, { name: "変形", w: "w-6" }]} />
      <AlignPanel />
      <TabBar
        tabs={[
          { name: "表", w: "w-6", active: true },
          { name: "線", w: "w-6" },
          { name: "パスファインダー", w: "w-[60px]" },
          { name: "テキストの回り込み", w: "w-[66px]" },
        ]}
      />
      <TablePanel />
      <TabBar menu={false} tabs={[{ name: "スクリプト", w: "w-[42px]" }, { name: "バックグラウンドタスク", w: "w-[79px]", active: true }, { name: "プリフライト", w: "w-12" }]} />
    </aside>
  );
}

const LINKS = [
  { file: "cccc.psd", color: "bg-[#00a0e9]" },
  { file: "mmmm.psd", color: "bg-[#c9007f]" },
  { file: "yyyy.psd", color: "bg-[#fff100]" },
];

function ColorPanel() {
  return (
    <section className="flex shrink-0 flex-col pt-px pb-0.5 pl-[3px]">
      <div className="flex">
        <div className="flex w-6 shrink-0 flex-col">
          <FillStroke className="ml-0.5 size-4" />
          <div className="mt-0.5 flex h-3 items-center gap-1">
            <button aria-label="Container" className="flex size-2.5 items-center justify-center bg-[#bdbdbd]"><span className="size-1 border border-[#555]" /></button>
            <button className="text-[7px] font-bold text-[#666]">T</button>
          </div>
          <div className="mt-2.5 flex items-center gap-1 pl-0.5">
            <Icon n="left" className="size-[5px] text-[#555]" />
            <span className="size-2.5 bg-[#231815]" />
          </div>
        </div>
        <div className="flex flex-col">
          {["C", "M", "Y", "K"].map((c) => (
            <label key={c} className="flex h-[13px] items-center text-[7px] text-[#555]">
              <span className="w-[9px]">{c}</span>
              <input
                type="range"
                aria-label={`${c} slider`}
                defaultValue={0}
                className="mb-1 h-[3px] w-[52px] appearance-none border border-[#d8d8d8] bg-[#f3f3f3] [&::-webkit-slider-thumb]:appearance-none"
              />
              <input aria-label={c} className="mr-0.5 ml-1 h-[11px] w-[18px] border border-[#cfcfcf] bg-white" />%
            </label>
          ))}
        </div>
      </div>
      <div className="mt-1 flex h-[9px] w-[115px]">
        <NoneSwatch className="size-[9px]" />
        <span className="flex-1 border-y border-[#444] bg-[linear-gradient(180deg,rgba(255,255,255,.2),rgba(0,0,0,.35)),linear-gradient(90deg,#d7261e,#f6e300_17%,#00913a_33%,#00a0e9_50%,#1d2088_67%,#e4007f_83%,#e60012)]" />
        <span className="w-2 border border-[#444] bg-[linear-gradient(#fff_50%,#000_50%)]" />
      </div>
    </section>
  );
}

function RightDock() {
  return (
    <aside className="flex w-[142px] shrink-0 flex-col">
      <div className="flex h-[7px] shrink-0 items-center justify-end bg-[#d5d5d5] pr-[3px]"><Icon n="dblRight" className="size-1 text-[#666]" /></div>
      <TabBar
        top={false}
        tabs={[{ name: "段落スタイル", w: "w-[51px]", active: true, arrows: true }, { name: "文字スタイ", w: "w-[37px]" }, { name: "オブジェク", w: "w-[37px]" }]}
      />
      <div className="flex h-3 shrink-0 items-center pr-0.5 pl-[3px] text-[6px] text-[#333]">
        <span className="flex-1">[基本段落]+</span>
        <button className="mr-1 text-[6px] text-[#555]">[a+]</button>
        <IconBtn n="bolt" label="Quick apply" icon="size-[7px] text-[#333]" />
      </div>
      <div className="flex h-[11px] shrink-0 items-center bg-[#b7d3f1] pl-[18px] text-[6px] text-[#333]">[基本段落]+</div>
      <div className="h-[167px] shrink-0" />
      <div className="flex h-3 shrink-0 items-center gap-1 border-t border-[#dcdcdc] pr-2.5 pl-[3px]">
        <IconBtn n="styleLoad" label="Load styles" />
        <IconBtn n="folder" label="New group" className="ml-auto size-2.5" />
        <IconBtn n="para" label="Clear overrides" />
        <IconBtn n="plusBox" label="New style" icon="size-[7px] text-[#666]" />
        <IconBtn n="trash" label="Delete style" icon="size-2 text-[#aaa]" />
      </div>
      <TabBar tabs={[{ name: "カラー", w: "w-[33px]", active: true, arrows: true }, { name: "スウォッチ", w: "w-[42px]" }]} />
      <ColorPanel />
      <TabBar tabs={[{ name: "レイヤー", w: "w-9" }, { name: "ページ", w: "w-[31px]" }, { name: "リンク", w: "w-[30px]", active: true }]} />
      <table className="w-[115px] table-fixed border-collapse text-[#444]">
        <colgroup>
          <col className="w-[13px]" />
          <col className="w-16" />
          <col className="w-[19px]" />
          <col className="w-[19px]" />
        </colgroup>
        <thead>
          <tr className="h-3 text-left text-[6px] *:p-0">
            <th className="pl-[3px]! font-normal" colSpan={2}>名前</th>
            <th className="border-l border-[#999]"><Icon n="warn" className="mx-auto size-2 text-[#444]" /></th>
            <th className="border-x border-[#999]"><Icon n="doc" className="mx-auto size-2 text-[#444]" /></th>
          </tr>
        </thead>
        <tbody>
          {LINKS.map((l) => (
            <tr key={l.file} className="h-[11px] border-b border-[#dcdcdc] text-[7px] leading-none *:p-0">
              <td><span className={clsx("ml-px block size-2.5 border border-[#666]", l.color)} /></td>
              <td>{l.file}</td>
              <td />
              <td><a href="#page-1" className="ml-3 text-[#3b97e0] underline">1</a></td>
            </tr>
          ))}
        </tbody>
      </table>
      <footer className="mt-auto flex h-[13px] shrink-0 items-center gap-1 border-t border-[#dcdcdc] pr-2.5 pl-1 text-[6px] text-[#444]">
        <Icon n="right" className="size-[5px] text-[#444]" />
        <span className="flex-1">3 個のリンク</span>
        {["relink", "chain", "goTo", "refresh", "pencil"].map((n) => <IconBtn key={n} n={n} label={n} icon="size-2 text-[#888]" />)}
      </footer>
    </aside>
  );
}

export default function App() {
  return (
    <div className="flex h-screen bg-white px-7 pt-[19px] pb-[37px] font-['Liberation_Sans','Noto_Sans_CJK_JP',sans-serif] leading-none">
      <div className="flex min-w-0 flex-1 flex-col overflow-hidden rounded-[3px] bg-[#efefef] shadow-[0_0_2px_rgba(0,0,0,0.4),0_10px_20px_rgba(0,0,0,0.4)]">
        <TitleBar />
        <ControlBar />
        <div className="flex min-h-0 flex-1">
          <Toolbox />
          <Document />
          <MiddleDock />
          <RightDock />
        </div>
      </div>
    </div>
  );
}
